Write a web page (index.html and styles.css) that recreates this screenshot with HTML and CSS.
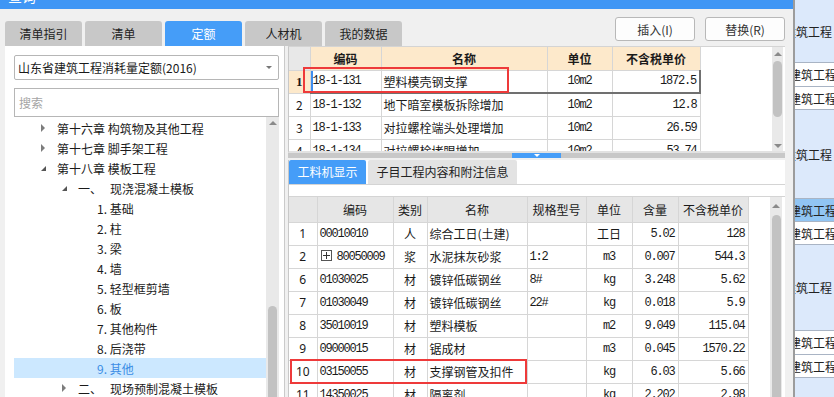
FILE: index.html
```html
<!DOCTYPE html>
<html lang="zh-CN">
<head>
    <meta charset="UTF-8">
    <title>定额查询</title>
    <link rel="stylesheet" href="styles.css">
</head>
<body>
<div class="screen">
    <div class="window">
        <div class="titlebar"><span>查询</span></div>

        <div class="toprow">
            <div class="tabs">
                <div class="tab">清单指引</div>
                <div class="tab">清单</div>
                <div class="tab active">定额</div>
                <div class="tab">人材机</div>
                <div class="tab">我的数据</div>
            </div>
            <div class="actions">
                <button class="btn">插入(I)</button>
                <button class="btn">替换(R)</button>
            </div>
        </div>

        <div class="content">
            <!-- 左侧定额库 + 章节树 -->
            <div class="left">
                <div class="select">山东省建筑工程消耗量定额(2016)<span class="caret"></span></div>
                <div class="search">搜索</div>
                <div class="tree-wrap">
                    <div class="tree">
                        <div class="node l0"><span class="arrow closed"></span>第十六章 构筑物及其他工程</div>
                        <div class="node l0"><span class="arrow closed"></span>第十七章 脚手架工程</div>
                        <div class="node l0"><span class="arrow open"></span>第十八章 模板工程</div>
                        <div class="node l1"><span class="arrow open"></span>一、&nbsp;&nbsp;&nbsp;现浇混凝土模板</div>
                        <div class="node l2">1. 基础</div>
                        <div class="node l2">2. 柱</div>
                        <div class="node l2">3. 梁</div>
                        <div class="node l2">4. 墙</div>
                        <div class="node l2">5. 轻型框剪墙</div>
                        <div class="node l2">6. 板</div>
                        <div class="node l2">7. 其他构件</div>
                        <div class="node l2">8. 后浇带</div>
                        <div class="node l2 sel">9. 其他</div>
                        <div class="node l1"><span class="arrow closed"></span>二、&nbsp;&nbsp;&nbsp;现场预制混凝土模板</div>
                    </div>
                    <div class="vscroll tree-scroll">
                        <span class="up"></span>
                        <span class="thumb"></span>
                    </div>
                </div>
            </div>

            <div class="right">
                <!-- 定额子目 -->
                <div class="pane-top">
                    <div class="grid-wrap">
                        <table class="grid quota">
                            <colgroup>
                                <col class="q-rn"><col class="q-code"><col class="q-name"><col class="q-unit"><col class="q-price">
                            </colgroup>
                            <tr class="head">
                                <td class="rn"></td><td>编码</td><td>名称</td><td>单位</td><td>不含税单价</td>
                            </tr>
                            <tr class="cur">
                                <td class="rn">1</td>
                                <td class="num l first">18-1-131</td>
                                <td class="l">塑料模壳钢支撑</td>
                                <td class="num c">10m2</td>
                                <td class="num r last">1872.5</td>
                            </tr>
                            <tr>
                                <td class="rn">2</td><td class="num l">18-1-132</td><td class="l">地下暗室模板拆除增加</td><td class="num c">10m2</td><td class="num r">12.8</td>
                            </tr>
                            <tr>
                                <td class="rn">3</td><td class="num l">18-1-133</td><td class="l">对拉螺栓端头处理增加</td><td class="num c">10m2</td><td class="num r">26.59</td>
                            </tr>
                            <tr>
                                <td class="rn">4</td><td class="num l">18-1-134</td><td class="l">对拉螺栓堵眼增加</td><td class="num c">10m2</td><td class="num r">53.74</td>
                            </tr>
                        </table>
                        <div class="mark mark-quota"></div>
                    </div>
                    <div class="vscroll grid-scroll">
                        <span class="up"></span>
                        <span class="thumb short"></span>
                        <span class="down"></span>
                    </div>
                </div>

                <div class="splitter"><span class="handle"></span></div>

                <div class="lower">
                    <div class="subtabs">
                        <div class="subtab active">工料机显示</div>
                        <div class="subtab">子目工程内容和附注信息</div>
                    </div>
                    <div class="pane-bottom">
                        <div class="toolbar"></div>
                        <div class="grid-area">
                            <div class="grid-wrap">
                                <table class="grid res">
                                    <colgroup>
                                        <col class="r-rn"><col class="r-code"><col class="r-type"><col class="r-name"><col class="r-spec"><col class="r-unit"><col class="r-qty"><col class="r-price">
                                    </colgroup>
                                    <tr class="head">
                                        <td></td><td>编码</td><td>类别</td><td>名称</td><td>规格型号</td><td>单位</td><td>含量</td><td>不含税单价</td>
                                    </tr>
                                    <tr><td class="rn">1</td><td class="num l">00010010</td><td class="c">人</td><td class="l">综合工日(土建)</td><td></td><td class="c">工日</td><td class="num r">5.02</td><td class="num r">128</td></tr>
                                    <tr><td class="rn">2</td><td class="num l"><span class="plus"></span>80050009</td><td class="c">浆</td><td class="l">水泥抹灰砂浆</td><td class="num l">1:2</td><td class="num c">m3</td><td class="num r">0.007</td><td class="num r">544.3</td></tr>
                                    <tr><td class="rn">6</td><td class="num l">01030025</td><td class="c">材</td><td class="l">镀锌低碳钢丝</td><td class="num l">8#</td><td class="num c">kg</td><td class="num r">3.248</td><td class="num r">5.62</td></tr>
                                    <tr><td class="rn">7</td><td class="num l">01030049</td><td class="c">材</td><td class="l">镀锌低碳钢丝</td><td class="num l">22#</td><td class="num c">kg</td><td class="num r">0.018</td><td class="num r">5.9</td></tr>
                                    <tr><td class="rn">8</td><td class="num l">35010019</td><td class="c">材</td><td class="l">塑料模板</td><td></td><td class="num c">m2</td><td class="num r">9.049</td><td class="num r">115.04</td></tr>
                                    <tr><td class="rn">9</td><td class="num l">09000015</td><td class="c">材</td><td class="l">锯成材</td><td></td><td class="num c">m3</td><td class="num r">0.045</td><td class="num r">1570.22</td></tr>
                                    <tr><td class="rn">10</td><td class="num l">03150055</td><td class="c">材</td><td class="l">支撑钢管及扣件</td><td></td><td class="num c">kg</td><td class="num r">6.03</td><td class="num r">5.66</td></tr>
                                    <tr><td class="rn">11</td><td class="num l">14350025</td><td class="c">材</td><td class="l">隔离剂</td><td></td><td class="num c">kg</td><td class="num r">2.202</td><td class="num r">2.98</td></tr>
                                </table>
                                <div class="mark mark-res"></div>
                            </div>
                            <div class="vscroll grid-scroll">
                                <span class="up"></span>
                                <span class="thumb long"></span>
                            </div>
                        </div>
                    </div>
                </div>
            </div>
        </div>
    </div>

    <!-- 后面窗口露出的一列 -->
    <div class="side">
        <div class="cell tall h62"><span class="cut">建筑工程</span></div>
        <div class="cell white h23"><span>建筑工程</span></div>
        <div class="cell white h22"><span>建筑工程</span></div>
        <div class="cell tall h88"><span class="cut">建筑工程</span></div>
        <div class="cell picked h22"><span>建筑工程</span></div>
        <div class="cell white h22"><span>建筑工程</span></div>
        <div class="cell tall h85"><span class="cut">建筑工程</span></div>
        <div class="cell white h23"><span>建筑工程</span></div>
        <div class="cell white h22"><span>建筑工程</span></div>
        <div class="cell tall h62"></div>
    </div>
</div>
</body>
</html>
```

FILE: styles.css
```css
* {
    box-sizing: border-box;
}

body {
    margin: 0;
    font-family: "Noto Sans CJK SC", "Noto Sans", sans-serif;
    font-size: 12px;
    color: #1a1a1a;
    background-color: #f0f0f0;
}

.screen {
    display: flex;
    height: 397px;
    overflow: hidden;
}

.window {
    width: 793px;
    flex: none;
    display: flex;
    flex-direction: column;
    background: #f0f0f0;
}

.titlebar {
    height: 9px;
    background: #3f96f5;
    overflow: hidden;
    color: white;
}

.titlebar span {
    display: block;
    margin-top: -12px;
    padding-left: 8px;
    font-size: 14px;
    line-height: 16px;
}

/* 顶部页签 + 按钮 */
.toprow {
    display: flex;
    align-items: flex-end;
    height: 37px;
    padding: 0 8px 0 5px;
}

.tabs {
    display: flex;
    gap: 3px;
}

.tab {
    width: 77px;
    height: 25px;
    line-height: 25px;
    text-align: center;
    background: #c8c8c8;
    border-radius: 3px 3px 0 0;
    color: #222;
}

.tab.active {
    background: #459df8;
    color: white;
}

.actions {
    margin-left: auto;
    align-self: flex-start;
    margin-top: 8px;
    display: flex;
    gap: 10px;
}

.btn {
    width: 80px;
    height: 24px;
    padding: 0;
    border: 1px solid #b8b8b8;
    border-radius: 3px;
    background: #fdfdfd;
    font-family: inherit;
    font-size: 12px;
    color: #333;
}

.content {
    flex: 1;
    min-height: 0;
    display: flex;
    gap: 3px;
    padding: 0 8px 0 5px;
}

/* 左侧 */
.left {
    width: 280px;
    flex: none;
    display: flex;
    flex-direction: column;
    padding: 9px 5px 0 9px;
    background: white;
    border-right: 1px solid #cacaca;
}

.select {
    height: 25px;
    display: flex;
    align-items: center;
    padding: 0 6px 0 3px;
    border: 1px solid #b6b6b6;
    border-radius: 2px;
}

.select .caret {
    margin-left: auto;
    border-top: 3px solid #777;
    border-left: 3px solid transparent;
    border-right: 3px solid transparent;
}

.search {
    height: 29px;
    margin-top: 8px;
    display: flex;
    align-items: center;
    padding-left: 4px;
    border: 1px solid #b6b6b6;
    color: #a5a5a5;
}

.tree-wrap {
    flex: 1;
    min-height: 0;
    display: flex;
}

.tree {
    flex: 1;
    padding-top: 1px;
}

.node {
    height: 20px;
    display: flex;
    align-items: center;
    white-space: nowrap;
}

.node.l0 { padding-left: 27px; }
.node.l1 { padding-left: 48px; }
.node.l2 { padding-left: 83px; }

.node.sel {
    background: #cce8ff;
    color: #3b8de5;
}

.arrow {
    width: 16px;
    flex: none;
    display: flex;
    align-items: center;
}

.arrow.closed::before {
    content: "";
    border-left: 4px solid #7d7d7d;
    border-top: 4px solid transparent;
    border-bottom: 4px solid transparent;
}

.arrow.open::before {
    content: "";
    border-bottom: 5px solid #555;
    border-left: 5px solid transparent;
}

/* 滚动条 */
.vscroll {
    flex: none;
    display: flex;
    flex-direction: column;
    align-items: center;
    background: #e9e9e9;
}

.vscroll .up,
.vscroll .down {
    margin: 3px 0;
    border-left: 4px solid transparent;
    border-right: 4px solid transparent;
}

.vscroll .up { border-bottom: 4px solid #8a8a8a; }
.vscroll .down { border-top: 4px solid #8a8a8a; margin-top: auto; }

.vscroll .thumb {
    width: 9px;
    background: #c2c2c2;
    border-radius: 5px;
}

.tree-scroll {
    width: 13px;
    padding-top: 1px;
}

.tree-scroll .thumb {
    margin-top: auto;
    height: 91px;
    border-radius: 5px 5px 0 0;
}

.grid-scroll {
    width: 11px;
    margin-right: 2px;
    padding-top: 2px;
}

.grid-scroll .thumb.short {
    height: 56px;
    margin-top: 2px;
}

.grid-scroll .thumb.long {
    flex: 1;
    margin-top: 4px;
    border-radius: 5px 5px 0 0;
}

/* 右侧 */
.right {
    flex: 1;
    min-width: 0;
    display: flex;
    flex-direction: column;
}

.pane-top {
    height: 107px;
    flex: none;
    display: flex;
    background: white;
    border-top: 1px solid #d4d4d4;
    border-left: 1px solid #c8c8c8;
    border-bottom: 2px solid #e2e2e2;
}

.grid-wrap {
    position: relative;
    flex: 1;
    overflow: hidden;
}

.grid {
    border-collapse: collapse;
    table-layout: fixed;
    white-space: nowrap;
}

.grid td {
    padding: 0;
    border: 1px solid #d6d6d6;
    overflow: hidden;
}

.grid tr td:first-child { border-left: none; }
.grid tr.head td { border-top: none; }

.grid .l { padding-left: 2px; }
.grid .c { text-align: center; }
.grid .r { text-align: right; padding-right: 3px; }

.num {
    font-family: "Liberation Mono", "Noto Sans CJK SC", monospace;
    letter-spacing: -1.2px;
}

.rn { text-align: center; }

/* 定额表 */
.quota { width: 411px; }
.quota tr { height: 23px; }
.quota .q-rn { width: 21px; }
.quota .q-code { width: 71px; }
.quota .q-name { width: 166px; }
.quota .q-unit { width: 65px; }
.quota .q-price { width: 88px; }

.quota tr.head td {
    background: #fde9cb;
    font-weight: bold;
    text-align: center;
}

.quota tr.head td.rn { background: #e8e8e8; }

.quota tr.cur td.rn {
    background: #fde9cb;
    font-weight: bold;
    font-family: "Liberation Serif", serif;
    font-size: 13px;
}

.quota tr.cur td:not(.rn) {
    border-top: 1px solid #a9cdf5;
    border-bottom: 2px solid #707070;
}

.quota tr.cur td.first { box-shadow: inset 2px 0 #3d8ef0; }
.quota tr.cur td.last { border-right: 2px solid #707070; }

.mark {
    position: absolute;
    border: 2px solid #ee3a3a;
    pointer-events: none;
}

.mark-quota {
    left: 14px;
    top: 20px;
    width: 206px;
    height: 26px;
}

/* 分隔条 */
.splitter {
    height: 5px;
    flex: none;
    display: flex;
    justify-content: center;
    background: #c8c8c8;
}

.handle {
    width: 49px;
    display: flex;
    justify-content: center;
    padding-top: 1px;
    background: #459df8;
}

.handle::before {
    content: "";
    height: 0;
    border-top: 3px solid white;
    border-left: 3px solid transparent;
    border-right: 3px solid transparent;
}

.lower {
    flex: 1;
    min-height: 0;
    display: flex;
    flex-direction: column;
    margin-top: 2px;
    background: white;
    border-left: 1px solid #c8c8c8;
}

.subtabs {
    display: flex;
    gap: 2px;
    height: 24px;
    flex: none;
}

.subtab {
    width: 149px;
    line-height: 24px;
    text-align: center;
    background: #e3e3e3;
    border-radius: 2px 2px 0 0;
    color: #222;
}

.subtab.active {
    width: 77px;
    background: #459df8;
    color: white;
}

.pane-bottom {
    flex: 1;
    min-height: 0;
    display: flex;
    flex-direction: column;
    border-top: 1px solid #d4d4d4;
}

.toolbar {
    height: 12px;
    flex: none;
    border-bottom: 1px solid #d4d4d4;
}

.grid-area {
    flex: 1;
    min-height: 0;
    display: flex;
}

.grid-area .grid-scroll {
    width: 12px;
    margin-right: 3px;
    padding-top: 4px;
}

/* 人材机表 */
.res { width: 459px; }
.res tr { height: 23px; }
.res tr.head { height: 25px; }
.res .r-rn { width: 28px; }
.res .r-code { width: 76px; }
.res .r-type { width: 34px; }
.res .r-name { width: 100px; }
.res .r-spec { width: 59px; }
.res .r-unit { width: 46px; }
.res .r-qty { width: 46px; }
.res .r-price { width: 70px; }

.res tr.head td {
    background: #e6e6e6;
    text-align: center;
}

.res td.rn { font-family: "Noto Sans", sans-serif; }

.plus {
    display: inline-block;
    position: relative;
    width: 11px;
    height: 11px;
    margin: 0 5px 0 1px;
    vertical-align: -1px;
    border: 1px solid #555;
}

.plus::before,
.plus::after {
    content: "";
    position: absolute;
    background: #333;
}

.plus::before { left: 1px; right: 1px; top: 4px; height: 1px; }
.plus::after { top: 1px; bottom: 1px; left: 4px; width: 1px; }

.mark-res {
    left: 1px;
    top: 162px;
    width: 237px;
    height: 25px;
}

/* 右侧露出的列 */
.side {
    flex: 1;
    overflow: hidden;
    border-left: 2px solid #9c9c9c;
    background: #dce9fb;
}

.cell {
    display: flex;
    align-items: center;
    white-space: nowrap;
    border-bottom: 1px solid #a9b4c4;
    font-size: 12px;
    color: #222;
}

.cell span { margin-left: -6px; }
.cell span.cut { margin-left: -11px; }

.cell.white { background: white; }
.cell.picked { background: #91c5f3; }

.h22 { height: 23px; }
.h23 { height: 24px; }
.h62 { height: 63px; }
.h85 { height: 86px; }
.h88 { height: 89px; }
```
